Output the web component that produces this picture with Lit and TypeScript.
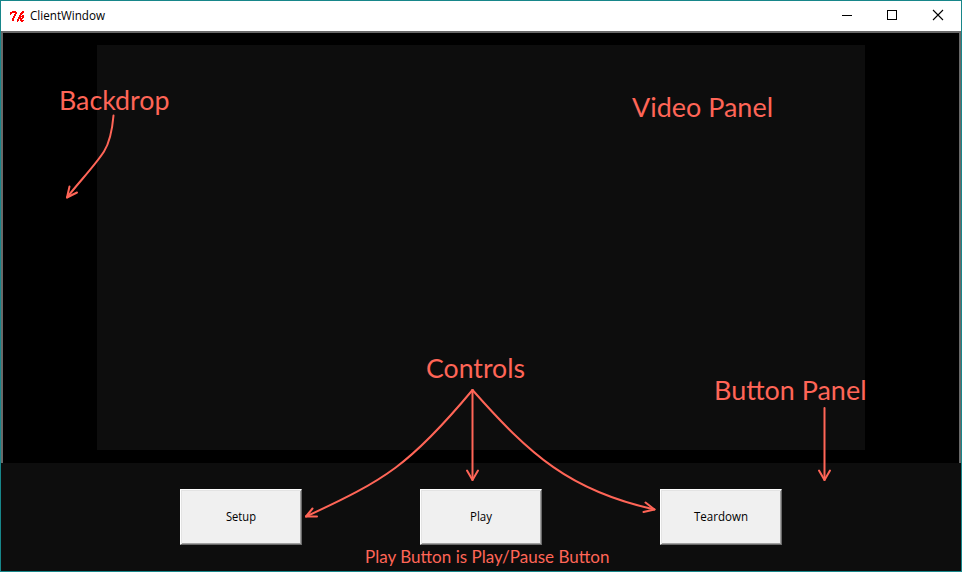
import { LitElement, html, css, svg } from "lit";
import { customElement } from "lit/decorators.js";

const FEATHER = [
  "..####......##.",
  "#######....###.",
  "##...##...###..",
  "#...##....##...",
  "....##...##.##.",
  "...##....#####.",
  "...##...###.##.",
  "..##....#####..",
  "..##...##.##...",
  "..##...##.####.",
  ".......#...##..",
];

const LABELS = [
  { t: "Backdrop", x: 59, y: 110, w: 110.5, s: 26.5 },
  { t: "Video Panel", x: 632, y: 117, w: 141, s: 26.5 },
  { t: "Controls", x: 426, y: 378, w: 99, s: 26.5 },
  { t: "Button Panel", x: 714, y: 400, w: 152.5, s: 26.5 },
  { t: "Play Button is Play/Pause Button", x: 365, y: 563, w: 244.5, s: 17.5 },
];

const ARROWS = [
  "M113.500 115.500C112.500 127 110 142 104 151.500C95 165.500 79 182 67 197.500",
  "M69.500 186.500L67 197.500L77 192.500",
  "M472.500 390C410 465 385 480 306 516.500",
  "M312.500 508.500L306 516.500L317 516.500",
  "M472.500 390V480",
  "M467 470.500L472.500 480L478 470.500",
  "M472.500 390C530 455 570 491 654.500 509.500",
  "M645.500 502.500L654.500 509.500L643.500 512",
  "M824.500 408V480",
  "M819 470.500L824.500 480L830 470.500",
];

@customElement("app-root")
export class AppRoot extends LitElement {
  static styles = css`
    :host {
      display: block;
      position: relative;
      width: 962px;
      height: 572px;
      font: 12px/16px "Open Sans", "Noto Sans", sans-serif;
      color: #000;
    }
    .window {
      box-sizing: border-box;
      height: 100%;
      border: 1px solid #17868a;
      display: flex;
      flex-direction: column;
      background: #0d0d0d;
    }
    .titlebar {
      height: 30px;
      background: #fff;
      display: flex;
      align-items: center;
    }
    .text { display: block; overflow: visible; }
    .logo { width: 15px; height: 11px; margin-left: 9px; margin-right: 5px; }
    .title { flex: 1; }
    .sys { width: 136px; height: 30px; }
    .backdrop {
      box-sizing: border-box;
      height: 432px;
      border: 2px solid #696969;
      border-bottom: 0;
      background: #000;
      padding: 12px 94px 13px;
      display: flex;
    }
    .video { flex: 1; background: #0d0d0d; }
    .panel {
      flex: 1;
      display: flex;
      gap: 118px;
      padding: 26px 0 0 179px;
      align-items: flex-start;
    }
    .btn {
      box-sizing: border-box;
      width: 122px;
      height: 56px;
      padding: 0;
      border: 1px solid;
      border-color: #fff #696969 #696969 #fff;
      border-radius: 0;
      background: #f0f0f0;
      box-shadow: inset 1px 1px #e3e3e3, inset -1px -1px #a0a0a0;
      display: flex;
      align-items: center;
      justify-content: center;
      font: inherit;
      color: inherit;
    }
    .notes { position: absolute; inset: 0; pointer-events: none; }
    .arrow { fill: none; stroke: #ff6557; stroke-width: 2; stroke-linecap: round; stroke-linejoin: round; }
    .label { fill: #ff6557; font-family: Lato, "Open Sans", sans-serif; }
  `;

  private caption(text: string, width: number) {
    return html`<svg class="text" width=${width} height="16">
      <text x="0" y="12" textLength=${width} lengthAdjust="spacingAndGlyphs">${text}</text>
    </svg>`;
  }

  render() {
    const buttons: [string, number][] = [["Setup", 30], ["Play", 22], ["Teardown", 54]];
    return html`
      <div class="window">
        <div class="titlebar">
          <svg class="logo" viewBox="0 0 15 11" shape-rendering="crispEdges" fill="#f00">
            ${FEATHER.flatMap((row, y) =>
              [...row].map((c, x) => (c === "#" ? svg`<rect x=${x} y=${y} width="1" height="1"/>` : null))
            )}
          </svg>
          <div class="title">${this.caption("ClientWindow", 75)}</div>
          <svg class="sys" viewBox="825 1 136 30" fill="none" stroke="#000">
            <path d="M842 15.500H852M887.500 10.500H896.500V19.500H887.500Z" shape-rendering="crispEdges" />
            <path d="M933 10L943 20M943 10L933 20" stroke-width="1.100" />
          </svg>
        </div>
        <div class="backdrop"><div class="video"></div></div>
        <div class="panel">
          ${buttons.map(([t, w]) => html`<button class="btn">${this.caption(t, w)}</button>`)}
        </div>
      </div>
      <svg class="notes" width="962" height="572">
        ${ARROWS.map((d) => svg`<path class="arrow" d=${d} />`)}
        ${LABELS.map(
          (l) => svg`<text class="label" x=${l.x} y=${l.y} font-size=${l.s} textLength=${l.w} lengthAdjust="spacingAndGlyphs">${l.t}</text>`
        )}
      </svg>
    `;
  }
}
